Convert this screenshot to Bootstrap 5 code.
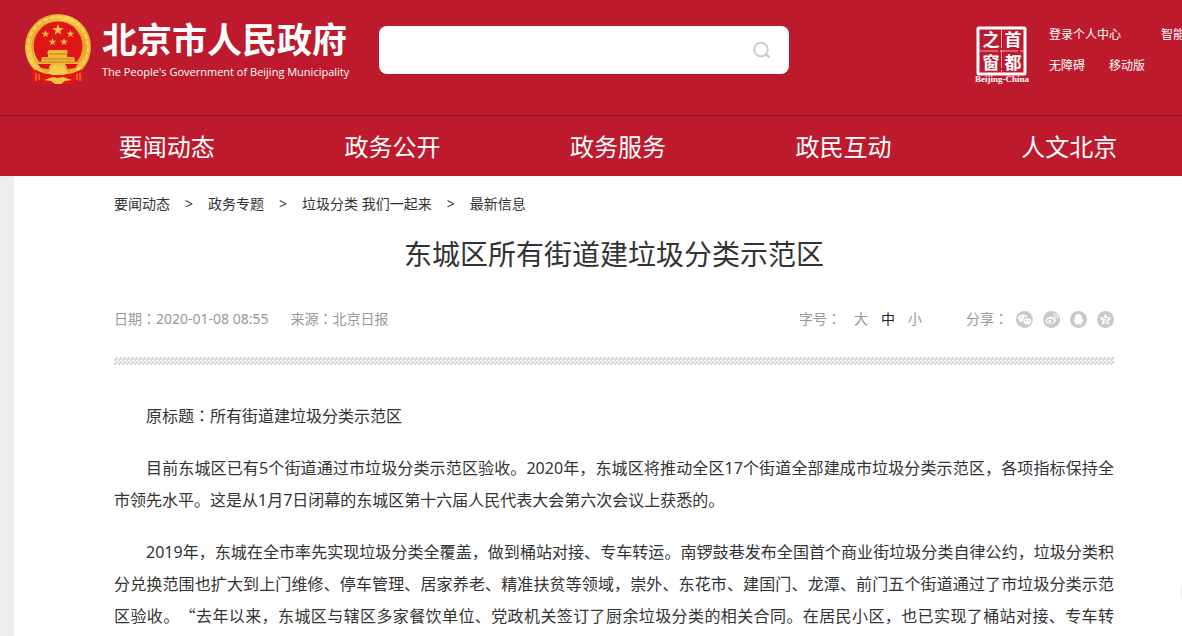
<!DOCTYPE html>
<html lang="zh-CN">
<head>
<meta charset="utf-8">
<meta name="viewport" content="width=device-width, initial-scale=1">
<title>东城区所有街道建垃圾分类示范区</title>
<link href="https://cdn.jsdelivr.net/npm/bootstrap@5.3.0/dist/css/bootstrap.min.css" rel="stylesheet">
<style>
body { font-family: "Noto Sans", "Noto Sans CJK SC", sans-serif; background: #ededed; color: #333; overflow-x: hidden; text-spacing-trim: space-all; }
a { color: inherit; text-decoration: none; }
.site-header { background: #bd1a2d; color: #fff; }
.header-top { height: 115px; padding: 14px 0 0 24px; overflow: hidden; }
.brand-text { margin-left: 10px; width: 277px; }
.brand-zh { font-size: 35px; line-height: 52px; font-weight: 700; }
.brand-en { font-family: "Open Sans", sans-serif; font-size: 11px; line-height: 12px; }
.search-box { width: 410px; height: 48px; margin-top: 12px; background: #fff; border-radius: 8px; }
.search-box input { border: 0; background: transparent; box-shadow: none; }
.search-box button { padding: 0 18px 0 8px; border: 0; background: transparent; line-height: 1; }
.seal { margin: 12px 19px 0 0; }
.quick-links { width: 133px; font-size: 12px; line-height: 31px; margin-top: 5px; }
.main-nav { border-top: 1px solid #8f1425; padding: 2px 0 0 54px; }
.main-nav a { font-size: 24px; line-height: 58px; }
.article-page { margin-left: 14px; background: #fff; padding: 18px 68px 20px 100px; overflow: hidden; }
.crumbs { font-size: 14px; line-height: 20px; gap: 15px; }
.article-title { font-size: 28px; line-height: 40px; font-weight: 400; margin: 20px 0 0; }
.meta-row { font-size: 14px; line-height: 20px; margin-top: 35px; color: #999; }
.meta-date { margin-right: 22px; }
.size-group { margin-right: 44px; gap: 13px; }
.size-btn { border: 0; padding: 0; background: transparent; color: #999; }
.size-btn.current { color: #222; }
.share-list { gap: 10px; }
.share-list a { display: flex; }
.mid-punct { font-family: "Noto Sans CJK TC", sans-serif; line-height: 1; }
.wide-quote { font-family: "Noto Sans CJK SC", sans-serif; line-height: 1; }
.hatch { height: 8px; margin: 28px 0 35px; background: linear-gradient(135deg, #fff 37%, #d8d8d8 37% 63%, #fff 63%) 0 0 / 4px 4px; }
.article-body p { font-size: 16px; line-height: 32px; text-indent: 32px; margin: 0 0 20px; text-align: justify; }
.article-body p:last-child { margin: 0; text-align-last: justify; }
.side-dot { position: fixed; right: -34px; bottom: 26px; width: 36px; height: 36px; border-radius: 50%; background: #f3f3f3; }
</style>
</head>
<body>
<header class="site-header">
  <div class="header-top d-flex align-items-start">
    <svg class="flex-shrink-0" width="68" height="70" viewBox="0 0 68 70" role="img" aria-label="国徽">
      <defs>
        <linearGradient id="gold" x1="0" y1="0" x2="1" y2="1"><stop offset="0" stop-color="#d98c1c"/><stop offset=".35" stop-color="#f9cd45"/><stop offset=".7" stop-color="#eda728"/><stop offset="1" stop-color="#f8c840"/></linearGradient>
        <path id="star" d="M0-5 1.2-1.6 4.8-1.5 1.9.6 2.9 4 0 2-2.9 4-1.9.6-4.8-1.5-1.2-1.6Z" fill="#f3c044"/>
      </defs>
      <path d="M8 48v20l10-2v4h32v-4l10 2V48Z" fill="#e01814"/>
      <circle cx="34" cy="33" r="33" fill="url(#gold)"/>
      <circle cx="34" cy="33" r="30" fill="none" stroke="#fbd660" stroke-width="2" stroke-dasharray="5 2"/>
      <circle cx="34" cy="33" r="26" fill="none" stroke="#e09a25" stroke-width="1"/>
      <circle cx="34" cy="32" r="24.500" fill="#dd1717"/>
      <use href="#star" transform="translate(34 16) scale(1.200)"/>
      <use href="#star" transform="translate(21.500 20) scale(.800)"/>
      <use href="#star" transform="translate(46.500 20) scale(.800)"/>
      <use href="#star" transform="translate(28.500 28) scale(.800)"/>
      <use href="#star" transform="translate(40 28) scale(.800)"/>
      <path d="M25 36h18l1 3-1 1v3h7l1 5h6l-2 5H13l-2-5h6l1-5h6v-3l-1-1Z" fill="#f1b83b"/>
      <path d="M25 40h18M19 45h30M13 48h42" stroke="#c77c18" stroke-width="1"/>
      <path d="M14 50h13l-3 5-7-1ZM54 50H41l3 5 7-1Z" fill="#dc1615"/>
      <path d="M8 55c5 1 10 4 15 5h22c5-1 10-4 15-5v13l-10-2v4H18v-4L8 68Z" fill="#e01814"/>
      <path d="M12 59v8M15 60v6M56 59v8M53 60v6" stroke="#f0a32c" stroke-width="1"/>
      <path d="m24 59 2-3-1-3 4 0 2-2 3 2 3-2 2 2 4 0-1 3 2 3-4 2H28Z" fill="#f8ca49"/>
      <path d="m20 66 9-3 5 1 5-1 9 3-7 1-4 3h-6l-4-3Z" fill="#f7c23d"/>
    </svg>
    <div class="brand-text flex-shrink-0 text-nowrap">
      <div class="brand-zh">北京市人民政府</div>
      <div class="brand-en">The People's Government of Beijing Municipality</div>
    </div>
    <form class="search-box d-flex align-items-center flex-shrink-0" role="search">
      <input class="form-control h-100" type="text" aria-label="搜索">
      <button type="button" aria-label="提交搜索"><svg width="18" height="18" viewBox="0 0 18 18" fill="none" stroke="#c9c9c9" stroke-width="1.800"><circle cx="8" cy="8.500" r="6.800"/><path d="m12.500 12.500 4 4" stroke-width="2.200"/></svg></button>
    </form>
    <a class="seal ms-auto flex-shrink-0" href="#" aria-label="首都之窗">
      <svg class="d-block" width="56" height="60" viewBox="0 0 56 60" fill="#fff">
        <rect x="4" y="2" width="47" height="46" rx="1" fill="none" stroke="#fff" stroke-width="3"/>
        <path d="M6 25h44M27.500 4v42" stroke="#e9a8ae" stroke-width="1" stroke-dasharray="18 2"/>
        <g font-family="Noto Sans CJK SC, sans-serif" font-size="17" font-weight="700" text-anchor="middle"><text x="17" y="20">之</text><text x="39" y="20">首</text><text x="17" y="43">窗</text><text x="39" y="43">都</text></g>
        <text x="28" y="56" font-family="Liberation Serif, serif" font-size="9" font-weight="700" text-anchor="middle">Beijing-China</text>
      </svg>
    </a>
    <div class="quick-links flex-shrink-0 text-nowrap">
      <div class="d-flex"><a href="#" class="me-3 pe-4">登录个人中心</a><a href="#">智能</a></div>
      <div class="d-flex"><a href="#" class="me-4">无障碍</a><a href="#">移动版</a></div>
    </div>
  </div>
  <nav class="main-nav d-flex text-center" aria-label="主导航">
    <a class="col" href="#">要闻动态</a><a class="col" href="#">政务公开</a><a class="col" href="#">政务服务</a><a class="col" href="#">政民互动</a><a class="col" href="#">人文北京</a>
  </nav>
</header>
<main class="article-page">
  <nav class="crumbs d-flex" aria-label="面包屑">
    <a href="#">要闻动态</a><span>&gt;</span><a href="#">政务专题</a><span>&gt;</span><a href="#">垃圾分类 我们一起来</a><span>&gt;</span><a href="#">最新信息</a>
  </nav>
  <h1 class="article-title text-center">东城区所有街道建垃圾分类示范区</h1>
  <div class="meta-row d-flex">
    <span class="meta-date">日期<span class="mid-punct" lang="zh-TW">：</span>2020-01-08 08:55</span><span>来源<span class="mid-punct" lang="zh-TW">：</span>北京日报</span>
    <div class="size-group d-flex ms-auto">
      <span>字号<span class="mid-punct" lang="zh-TW">：</span></span>
      <button type="button" class="size-btn">大</button><button type="button" class="size-btn current">中</button><button type="button" class="size-btn">小</button>
    </div>
    <span class="me-2">分享<span class="mid-punct" lang="zh-TW">：</span></span>
    <div class="share-list d-flex align-items-center">
      <a href="#" aria-label="微信"><svg width="17" height="17" viewBox="0 0 17 17"><circle cx="8.500" cy="8.500" r="8.500" fill="#c9c9c9"/><path d="M7 3.500c-2.800 0-4.800 1.600-4.800 3.700 0 1.200.6 2.100 1.600 2.800l-.4 1.500 1.700-.9 1.500.2c0-3 2-4.600 5-4.500C11 4.600 9.300 3.500 7 3.500Z" fill="#fff"/><path d="M11.400 7.300c-2.300 0-4 1.400-4 3.100s1.700 3 4 3l1.200-.2 1.300.8-.3-1.200c1-.6 1.700-1.500 1.700-2.500 0-1.700-1.700-3-3.900-3Z" fill="#fff"/><g fill="#bbb"><circle cx="5.200" cy="6.200" r=".8"/><circle cx="8.500" cy="6.200" r=".8"/><circle cx="10" cy="9.700" r=".7"/><circle cx="12.800" cy="9.700" r=".7"/></g></svg></a>
      <a href="#" aria-label="微博"><svg width="17" height="17" viewBox="0 0 17 17"><circle cx="8.500" cy="8.500" r="8.500" fill="#c9c9c9"/><path d="M7.500 5.600c.8-.4 1.400 0 1.100 1.100 1.800-.8 3-.3 2.600 1 1.500.4 2 1.300 1.500 2.600-.7 1.900-3 2.900-5.500 2.900-2.700 0-4.800-1.200-4.800-3 0-1.700 2.500-4.100 5.100-4.600Z" fill="#fff"/><ellipse cx="7.300" cy="10.100" rx="3.600" ry="2.400" fill="#c9c9c9"/><circle cx="6.900" cy="10.200" r="1.500" fill="#fff"/><path d="M10.700 5.500c1.400-.3 2.200.5 1.900 2M10.500 3.400c2.900-.5 4.600 1.500 4 4.300" fill="none" stroke="#fff" stroke-width="1.100"/></svg></a>
      <a href="#" aria-label="QQ"><svg width="17" height="17" viewBox="0 0 17 17"><circle cx="8.500" cy="8.500" r="8.500" fill="#c9c9c9"/><path d="M8.500 3C6.300 3 5 4.500 5 6.600L4.600 8.200c-.8 1-1.100 2-.9 2.800l1.200-.3.8 1.200-.7 1c.7.700 2.300.7 3.500.2 1.200.5 2.800.5 3.500-.2l-.7-1 .8-1.200 1.200.3c.2-.8-.1-1.800-.9-2.800L12 6.600C12 4.500 10.700 3 8.500 3Z" fill="#fff"/></svg></a>
      <a href="#" aria-label="QQ空间"><svg width="17" height="17" viewBox="0 0 17 17"><circle cx="8.500" cy="8.500" r="8.500" fill="#c9c9c9"/><path d="m8.500 2.500 1.900 3.700 4.200.6-3 2.900.7 4.200-3.800-2-3.800 2 .7-4.200-3-2.900 4.200-.6Z" fill="#fff"/><path d="M6 7.500h4.800L7 10.700h4" fill="none" stroke="#c9c9c9" stroke-width="1"/></svg></a>
    </div>
  </div>
  <div class="hatch"></div>
  <article class="article-body">
    <p>原标题<span class="mid-punct" lang="zh-TW">：</span>所有街道建垃圾分类示范区</p>
    <p>目前东城区已有5个街道通过市垃圾分类示范区验收。2020年，东城区将推动全区17个街道全部建成市垃圾分类示范区，各项指标保持全市领先水平。这是从1月7日闭幕的东城区第十六届人民代表大会第六次会议上获悉的。</p>
    <p>2019年，东城在全市率先实现垃圾分类全覆盖，做到桶站对接、专车转运。南锣鼓巷发布全国首个商业街垃圾分类自律公约，垃圾分类积分兑换范围也扩大到上门维修、停车管理、居家养老、精准扶贫等领域，崇外、东花市、建国门、龙潭、前门五个街道通过了市垃圾分类示范区验收。<span class="wide-quote">“</span>去年以来，东城区与辖区多家餐饮单位、党政机关签订了厨余垃圾分类的相关合同。在居民小区，也已实现了桶站对接、专车转</p>
  </article>
</main>
<div class="side-dot"></div>
<script src="https://cdn.jsdelivr.net/npm/bootstrap@5.3.0/dist/js/bootstrap.bundle.min.js"></script>
</body>
</html>
